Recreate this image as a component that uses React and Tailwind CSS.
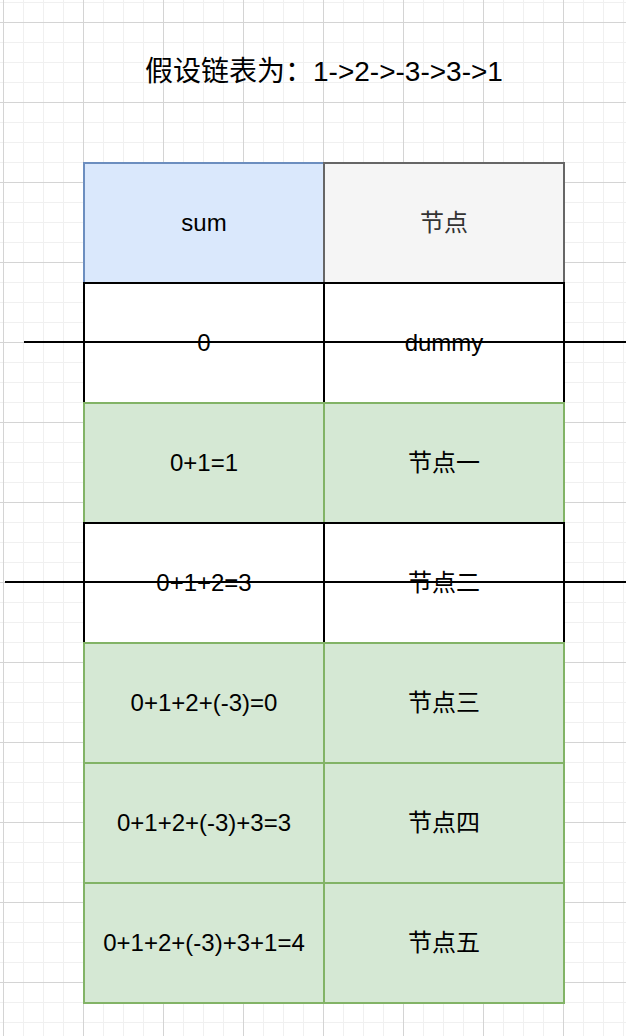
// Prefix-sum table diagram on a draw.io style grid canvas.

const rows = [
  { sum: "sum", node: "节点", kind: "head" },
  { sum: "0", node: "dummy", kind: "plain" },
  { sum: "0+1=1", node: "节点一", kind: "green" },
  { sum: "0+1+2=3", node: "节点二", kind: "plain" },
  { sum: "0+1+2+(-3)=0", node: "节点三", kind: "green" },
  { sum: "0+1+2+(-3)+3=3", node: "节点四", kind: "green" },
  { sum: "0+1+2+(-3)+3+1=4", node: "节点五", kind: "green" },
];

const cellBase =
  "w-[242px] h-[122px] border-2 flex items-center justify-center text-[24px] shrink-0";

const cellCls = (kind, col) => {
  if (kind === "head") {
    return col === 0
      ? `${cellBase} bg-[#dae8fc] border-[#6c8ebf] text-black`
      : `${cellBase} bg-[#f5f5f5] border-[#666666] text-[#333333]`;
  }
  if (kind === "green") return `${cellBase} bg-[#d5e8d4] border-[#82b366] text-black`;
  return `${cellBase} bg-white border-black text-black`;
};

export default function App() {
  return (
    <div
      className="relative w-[626px] min-h-[1036px] overflow-hidden bg-white bg-[linear-gradient(to_right,#d4d4d4_1px,transparent_1px),linear-gradient(to_bottom,#d4d4d4_1px,transparent_1px),linear-gradient(to_right,#f0f0f0_1px,transparent_1px),linear-gradient(to_bottom,#f0f0f0_1px,transparent_1px)] bg-[size:80px_80px,80px_80px,20px_20px,20px_20px] bg-[position:3px_22px,3px_22px,3px_2px,3px_2px] font-['Liberation_Sans','Noto_Sans_CJK_SC',sans-serif]"
    >
      <div className="pl-[83px] pt-[52px] w-[565px]">
        <div className="h-[40px] leading-[40px] text-center text-[28px] text-black whitespace-nowrap">
          假设链表为：1-&gt;2-&gt;-3-&gt;3-&gt;1
        </div>

        {/* table */}
        <div className="mt-[70px] flex flex-col">
          {rows.map((r, i) => (
            <div key={i} className={`flex ${i > 0 ? "-mt-[2px]" : ""}`}>
              <div className={cellCls(r.kind, 0)}>{r.sum}</div>
              <div className={`${cellCls(r.kind, 1)} -ml-[2px]`}>{r.node}</div>
            </div>
          ))}
        </div>
      </div>

      {/* strike-through lines over the plain rows */}
      <div className="absolute top-[341px] left-[24px] right-0 h-[2px] bg-black" />
      <div className="absolute top-[581px] left-[5px] right-0 h-[2px] bg-black" />
    </div>
  );
}
